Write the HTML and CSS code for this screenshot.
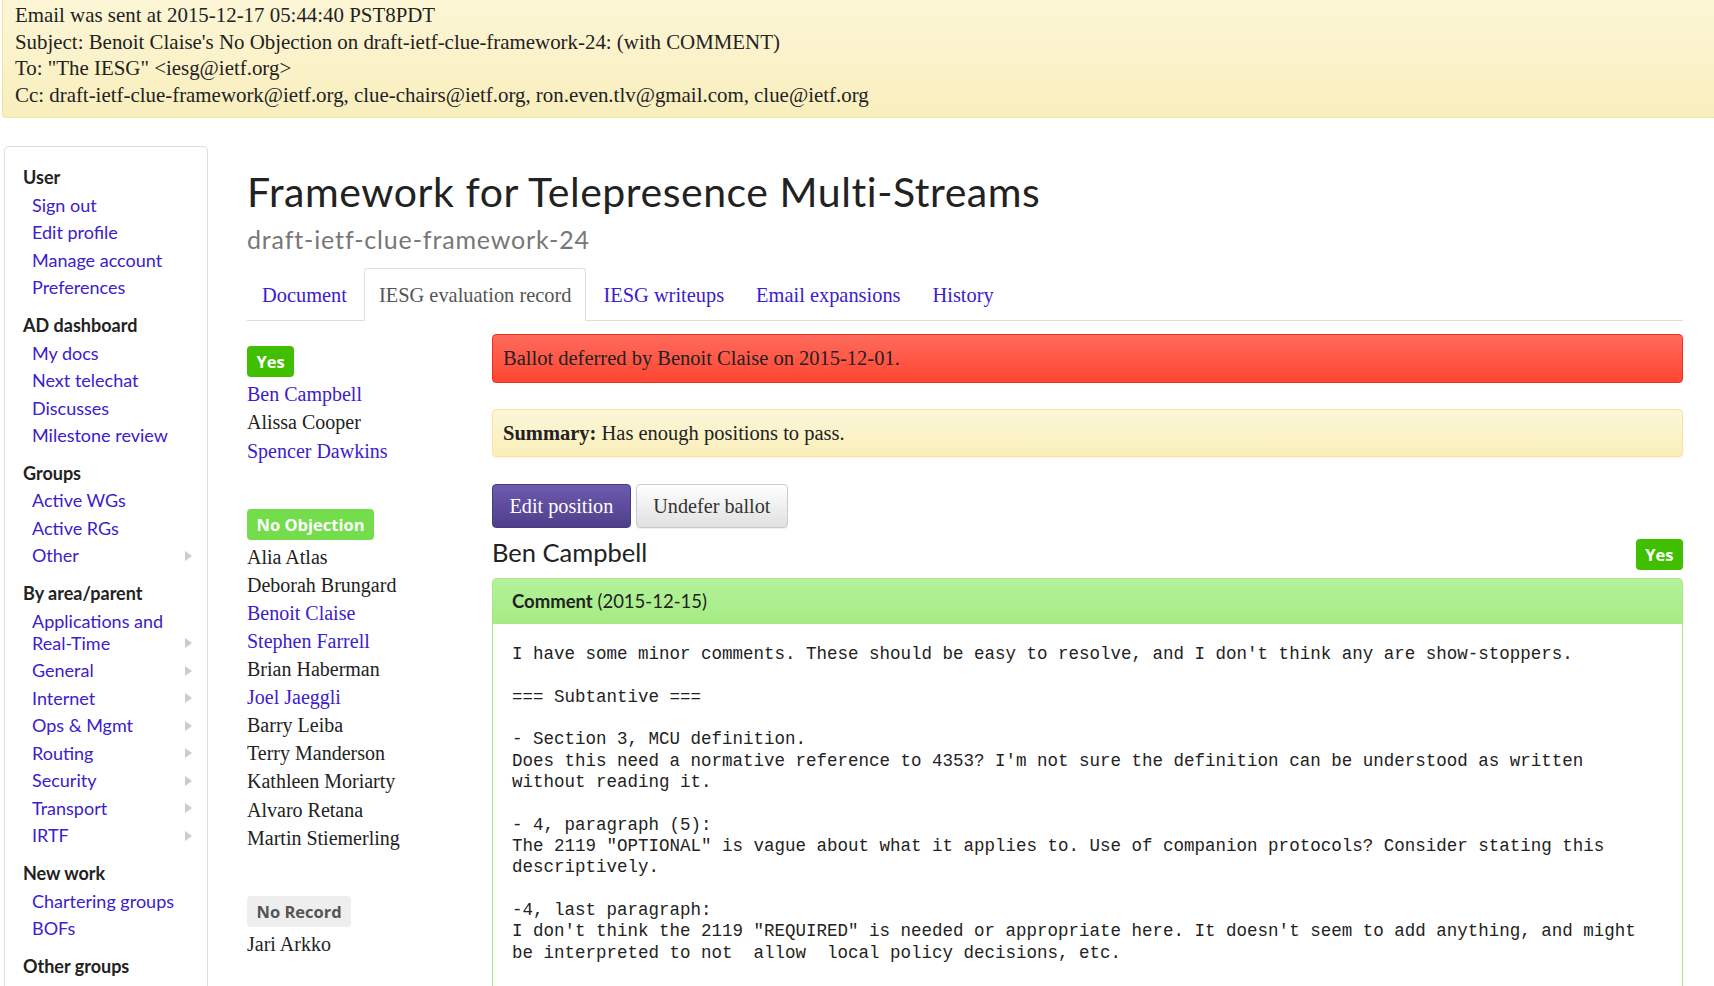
FILE: index.html
```html
<!DOCTYPE html>
<html lang="en">
<head>
<meta charset="utf-8">
<title>Framework for Telepresence Multi-Streams</title>
<link rel="stylesheet" href="styles.css">
</head>
<body>
<div class="email">
  <div>Email was sent at 2015-12-17 05:44:40 PST8PDT</div>
  <div>Subject: Benoit Claise's No Objection on draft-ietf-clue-framework-24: (with COMMENT)</div>
  <div>To: "The IESG" &lt;iesg@ietf.org&gt;</div>
  <div>Cc: draft-ietf-clue-framework@ietf.org, clue-chairs@ietf.org, ron.even.tlv@gmail.com, clue@ietf.org</div>
</div>

<div class="page">
  <nav class="sidebar">
    <div class="nav-section">
      <div class="nav-head">User</div>
      <a class="nav-item" href="#">Sign out</a>
      <a class="nav-item" href="#">Edit profile</a>
      <a class="nav-item" href="#">Manage account</a>
      <a class="nav-item" href="#">Preferences</a>
    </div>
    <div class="nav-section">
      <div class="nav-head">AD dashboard</div>
      <a class="nav-item" href="#">My docs</a>
      <a class="nav-item" href="#">Next telechat</a>
      <a class="nav-item" href="#">Discusses</a>
      <a class="nav-item" href="#">Milestone review</a>
    </div>
    <div class="nav-section">
      <div class="nav-head">Groups</div>
      <a class="nav-item" href="#">Active WGs</a>
      <a class="nav-item" href="#">Active RGs</a>
      <a class="nav-item" href="#"><span>Other</span><span class="caret"></span></a>
    </div>
    <div class="nav-section">
      <div class="nav-head">By area/parent</div>
      <a class="nav-item" href="#"><span>Applications and Real-Time</span><span class="caret"></span></a>
      <a class="nav-item" href="#"><span>General</span><span class="caret"></span></a>
      <a class="nav-item" href="#"><span>Internet</span><span class="caret"></span></a>
      <a class="nav-item" href="#"><span>Ops &amp; Mgmt</span><span class="caret"></span></a>
      <a class="nav-item" href="#"><span>Routing</span><span class="caret"></span></a>
      <a class="nav-item" href="#"><span>Security</span><span class="caret"></span></a>
      <a class="nav-item" href="#"><span>Transport</span><span class="caret"></span></a>
      <a class="nav-item" href="#"><span>IRTF</span><span class="caret"></span></a>
    </div>
    <div class="nav-section">
      <div class="nav-head">New work</div>
      <a class="nav-item" href="#">Chartering groups</a>
      <a class="nav-item" href="#">BOFs</a>
    </div>
    <div class="nav-section">
      <div class="nav-head">Other groups</div>
    </div>
  </nav>

  <main class="main">
    <h1 class="title">Framework for Telepresence Multi-Streams</h1>
    <div class="subtitle">draft-ietf-clue-framework-24</div>

    <ul class="tabs">
      <li class="tab"><a href="#">Document</a></li>
      <li class="tab active">IESG evaluation record</li>
      <li class="tab"><a href="#">IESG writeups</a></li>
      <li class="tab"><a href="#">Email expansions</a></li>
      <li class="tab"><a href="#">History</a></li>
    </ul>

    <div class="cols">
      <div class="positions">
        <div class="group">
          <div class="badge badge-yes">Yes</div>
          <div class="names">
            <a href="#">Ben Campbell</a>
            <span>Alissa Cooper</span>
            <a href="#">Spencer Dawkins</a>
          </div>
        </div>
        <div class="group">
          <div class="badge badge-noobj">No Objection</div>
          <div class="names">
            <span>Alia Atlas</span>
            <span>Deborah Brungard</span>
            <a href="#">Benoit Claise</a>
            <a href="#">Stephen Farrell</a>
            <span>Brian Haberman</span>
            <a href="#">Joel Jaeggli</a>
            <span>Barry Leiba</span>
            <span>Terry Manderson</span>
            <span>Kathleen Moriarty</span>
            <span>Alvaro Retana</span>
            <span>Martin Stiemerling</span>
          </div>
        </div>
        <div class="group">
          <div class="badge badge-norecord">No Record</div>
          <div class="names">
            <span>Jari Arkko</span>
          </div>
        </div>
      </div>

      <div class="detail">
        <div class="alert alert-danger">Ballot deferred by Benoit Claise on 2015-12-01.</div>
        <div class="alert alert-warning"><b>Summary:</b> Has enough positions to pass.</div>

        <div class="actions">
          <a class="btn btn-primary" href="#">Edit position</a>
          <a class="btn btn-default" href="#">Undefer ballot</a>
        </div>

        <div class="reviewer">
          <h2 class="reviewer-name">Ben Campbell</h2>
          <div class="badge badge-yes">Yes</div>
        </div>

        <div class="panel">
          <div class="panel-heading"><b>Comment</b> (2015-12-15)</div>
<pre class="panel-body">I have some minor comments. These should be easy to resolve, and I don't think any are show-stoppers.

=== Subtantive ===

- Section 3, MCU definition.
Does this need a normative reference to 4353? I'm not sure the definition can be understood as written
without reading it.

- 4, paragraph (5):
The 2119 "OPTIONAL" is vague about what it applies to. Use of companion protocols? Consider stating this
descriptively.

-4, last paragraph:
I don't think the 2119 "REQUIRED" is needed or appropriate here. It doesn't seem to add anything, and might
be interpreted to not  allow  local policy decisions, etc.
</pre>
        </div>
      </div>
    </div>
  </main>
</div>
</body>
</html>
```

FILE: styles.css
```css
* {
  box-sizing: border-box;
}

html {
  overflow: hidden;
}

body {
  margin: 0;
  font-family: "Liberation Serif", serif;
  color: #222;
  background: #fff;
}

a {
  color: #3b20cc;
  text-decoration: none;
}

/* Email banner */
.email {
  margin: 0 -8px 0 2px;
  padding: 2px 12px 9px;
  border: 1px solid #f2e39a;
  border-top: 0;
  border-radius: 0 0 4px 4px;
  background: linear-gradient(#fcf6d6, #f9eebd);
  font-size: 20.9px;
  line-height: 26.6px;
  color: #222;
}

/* Page layout */
.page {
  display: flex;
  align-items: flex-start;
  margin-top: 28px;
  padding: 0 31px 0 4px;
}

/* Sidebar */
.sidebar {
  flex: none;
  width: 204px;
  border: 1px solid #ddd;
  border-radius: 5px;
  padding: 16px 15px 60px 18px;
  font-family: Lato, sans-serif;
  font-size: 18px;
  line-height: 22px;
}

.nav-section + .nav-section {
  margin-top: 10.4px;
}

.nav-head {
  padding: 2.75px 0;
  font-weight: bold;
  color: #222;
}

.nav-item {
  display: flex;
  align-items: flex-end;
  justify-content: space-between;
  padding: 2.75px 0 2.75px 9px;
}

.caret {
  flex: none;
  width: 0;
  height: 0;
  margin: 0 0 5.5px 8px;
  border-left: 7px solid #ccc;
  border-top: 5.5px solid transparent;
  border-bottom: 5.5px solid transparent;
}

/* Main */
.main {
  flex: 1;
  min-width: 0;
  margin-left: 39px;
}

.title {
  margin: 22px 0 0;
  font-family: Lato, sans-serif;
  font-weight: normal;
  font-size: 41px;
  line-height: 48px;
  letter-spacing: 0.55px;
  color: #222;
}

.subtitle {
  margin-top: 9px;
  font-family: Lato, sans-serif;
  font-size: 25px;
  line-height: 28px;
  letter-spacing: 0.85px;
  color: #777;
}

.tabs {
  display: flex;
  list-style: none;
  margin: 15px 0 0;
  padding: 0;
  border-bottom: 1px solid #ddd;
}

.tab {
  margin: 0 2px -1px 0;
  padding: 15px 14px 14px;
  border: 1px solid transparent;
  border-radius: 4px 4px 0 0;
  font-size: 20.4px;
  line-height: 22px;
}

.tab.active {
  border-color: #ddd #ddd #fff;
  background: #fff;
  color: #555;
}

.cols {
  display: flex;
  align-items: flex-start;
}

.positions {
  flex: none;
  width: 245px;
  padding-top: 25px;
}

.group {
  margin-bottom: 44px;
}

.badge {
  display: block;
  width: fit-content;
  height: 31px;
  padding: 0 9.5px;
  border-radius: 4px;
  font-family: "Open Sans", sans-serif;
  font-weight: bold;
  font-size: 16.5px;
  line-height: 31px;
  color: #fff;
}

.badge-yes {
  background: #3fbf00;
}

.badge-noobj {
  background: #74dd4c;
}

.badge-norecord {
  background: #eee;
  color: #555;
}

.names {
  display: flex;
  flex-direction: column;
  align-items: flex-start;
  margin-top: 3px;
  font-size: 20px;
  line-height: 28.1px;
}

.names span {
  color: #222;
}

/* Detail column */
.detail {
  flex: 1;
  min-width: 0;
  padding-top: 12.5px;
}

.alert {
  padding: 12px 10px;
  border: 1px solid;
  border-radius: 4px;
  font-size: 20.5px;
  line-height: 23px;
  color: #222;
}

.alert-danger {
  background: linear-gradient(#ff6b5b, #ff4533);
  border-color: #f0301f;
}

.alert-warning {
  margin-top: 26px;
  line-height: 22px;
  background: linear-gradient(#fcf6da, #faefb9);
  border-color: #f6e59b;
  box-shadow: 0 1px 2px rgba(0, 0, 0, 0.05);
}

.actions {
  display: flex;
  gap: 5px;
  margin-top: 27px;
}

.btn {
  display: block;
  height: 44px;
  padding: 0 16.5px;
  border: 1px solid;
  border-radius: 4px;
  font-size: 20.2px;
  line-height: 42px;
}

.btn-primary {
  background: linear-gradient(#6d5bad, #4e3f8b);
  border-color: #463a80;
  color: #fff;
}

.btn-default {
  background: linear-gradient(#fff, #e0e0e0);
  border-color: #ccc;
  color: #333;
  box-shadow: 0 1px 1px rgba(0, 0, 0, 0.06);
}

.reviewer {
  display: flex;
  align-items: center;
  justify-content: space-between;
  margin-top: 11px;
}

.reviewer-name {
  margin: 0;
  font-family: Lato, sans-serif;
  font-weight: normal;
  font-size: 25.5px;
  line-height: 28px;
  color: #222;
  position: relative;
  top: -2px;
}

.panel {
  margin-top: 8px;
  border: 1px solid #a4e982;
  border-radius: 4px;
  background: #fff;
}

.panel-heading {
  padding: 11px 19px 11.5px;
  border-bottom: 1px solid #a4e982;
  border-radius: 3px 3px 0 0;
  background: linear-gradient(#b4f29b, #a6ec85);
  font-family: Lato, sans-serif;
  font-size: 18.5px;
  line-height: 22px;
  color: #222;
}

.panel-body {
  margin: 0;
  padding: 19.5px 19px 80px;
  font-family: "Liberation Mono", monospace;
  font-size: 17.5px;
  line-height: 21.35px;
  color: #222;
  white-space: pre;
}
```
